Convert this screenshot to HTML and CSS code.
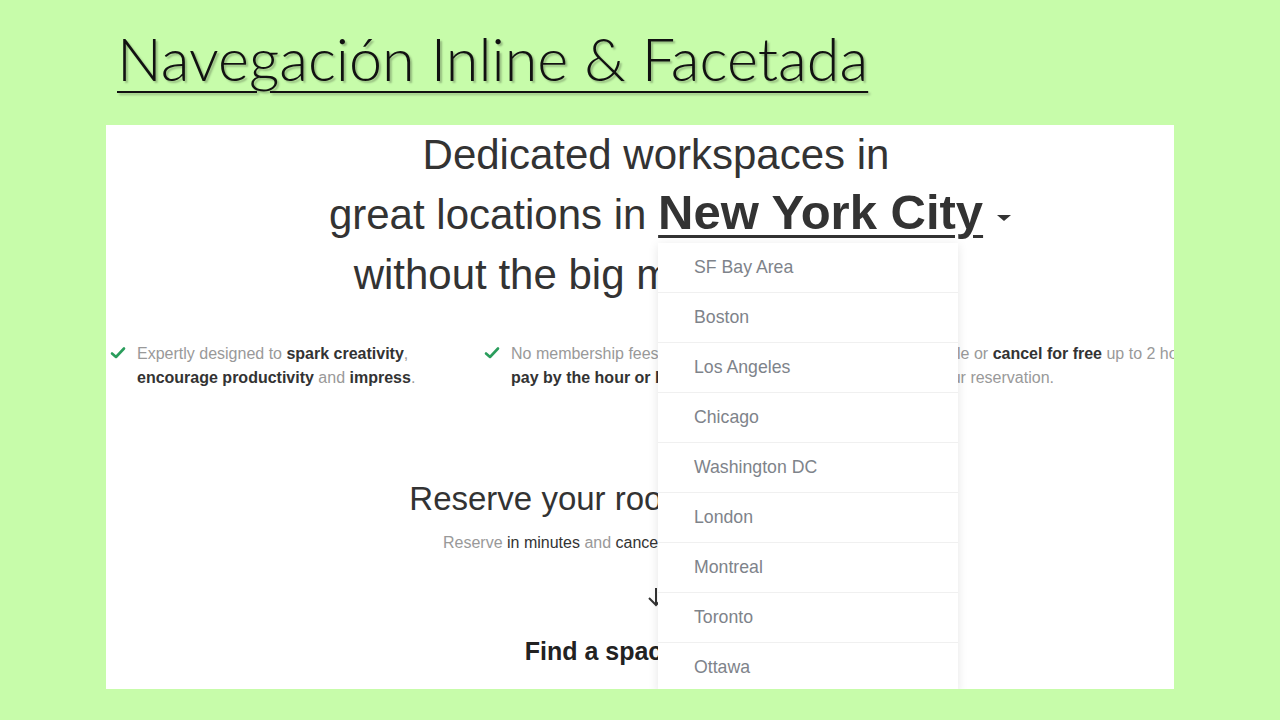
FILE: index.html
```html
<!DOCTYPE html>
<html lang="es">
<head>
<meta charset="utf-8">
<title>Navegación Inline &amp; Facetada</title>
<link rel="stylesheet" href="styles.css">
</head>
<body>
<header class="slide-head">
  <h1 class="slide-title">Navegación Inline &amp; Facetada</h1>
</header>
<main class="panel">
  <h2 class="hero">
    <span class="hero-line">Dedicated workspaces in</span>
    <span class="hero-line">great locations in <span class="city-wrap"><span class="city">New York City</span><svg class="caret" width="16" height="8" viewBox="0 0 16 8"><polygon points="1,1 15,1 8,7" fill="#333"/></svg></span></span>
    <span class="hero-line">without the big membership fees</span>
  </h2>

  <ul class="features">
    <li class="feature">
      <svg class="check" width="16" height="14" viewBox="0 0 16 14"><polyline points="2,7.5 6,11 14,2.5" fill="none" stroke="#2a9d5c" stroke-width="2.6" stroke-linecap="round" stroke-linejoin="round"/></svg>
      <p>Expertly designed to <b>spark creativity</b>,<br><b>encourage productivity</b> and <b>impress</b>.</p>
    </li>
    <li class="feature">
      <svg class="check" width="16" height="14" viewBox="0 0 16 14"><polyline points="2,7.5 6,11 14,2.5" fill="none" stroke="#2a9d5c" stroke-width="2.6" stroke-linecap="round" stroke-linejoin="round"/></svg>
      <p>No membership fees or long-term contracts,<br><b>pay by the hour or by the day</b>.</p>
    </li>
    <li class="feature">
      <svg class="check" width="16" height="14" viewBox="0 0 16 14"><polyline points="2,7.5 6,11 14,2.5" fill="none" stroke="#2a9d5c" stroke-width="2.6" stroke-linecap="round" stroke-linejoin="round"/></svg>
      <p>Reschedule or <b>cancel for free</b> up to 2 hours<br>before your reservation.</p>
    </li>
  </ul>

  <section class="reserve">
    <h3 class="reserve-title">Reserve your room in a few clicks</h3>
    <p class="reserve-sub">Reserve <span class="dark">in minutes</span> and <span class="dark">cancel</span> for free up to 2 hours before.</p>
    <svg class="arrow" width="24" height="20" viewBox="0 0 24 20"><path d="M12 1 V18 M5 11 L12 18 L19 11" fill="none" stroke="#333" stroke-width="2"/></svg>
    <h4 class="find">Find a space near you</h4>
  </section>

  <ul class="dropdown">
    <li class="dd-item">SF Bay Area</li>
    <li class="dd-item">Boston</li>
    <li class="dd-item">Los Angeles</li>
    <li class="dd-item">Chicago</li>
    <li class="dd-item">Washington DC</li>
    <li class="dd-item">London</li>
    <li class="dd-item">Montreal</li>
    <li class="dd-item">Toronto</li>
    <li class="dd-item">Ottawa</li>
  </ul>
</main>
</body>
</html>
```
FILE: styles.css
```css
html, body {
  margin: 0;
  padding: 0;
}
body {
  width: 1280px;
  height: 720px;
  background: #c7fcaa;
  overflow: hidden;
  font-family: "Liberation Sans", Arial, sans-serif;
}
.slide-head {
  height: 125px;
  padding-left: 117px;
  box-sizing: border-box;
}
.slide-title {
  margin: 0;
  padding-top: 22px;
  display: inline-block;
  font-family: Lato, "Open Sans", sans-serif;
  font-weight: 300;
  font-size: 59.3px;
  line-height: 72px;
  color: #111;
  text-decoration: underline;
  text-decoration-thickness: 2px;
  text-underline-offset: 10px;
  text-shadow: 2px 2px 2px rgba(0,0,0,0.25);
}
.panel {
  position: relative;
  margin-left: 106px;
  width: 1068px;
  height: 564px;
  background: #fff;
  overflow: hidden;
}
.hero {
  margin: 0;
  padding-left: 32px;
  font-weight: normal;
  font-size: 42px;
  line-height: 60px;
  color: #333;
  text-align: center;
}
.hero-line {
  display: block;
}
.city-wrap {
  position: relative;
}
.city {
  font-weight: bold;
  font-size: 49px;
  line-height: 1;
  text-decoration: underline;
  text-decoration-thickness: 3px;
  text-underline-offset: 6px;
}
.caret {
  position: absolute;
  left: calc(100% + 13px);
  top: 23px;
}
.features {
  list-style: none;
  margin: 37px 0 0 4px;
  padding: 0;
  display: grid;
  grid-template-columns: 374px 374px 374px;
  width: 1122px;
}
.feature {
  display: flex;
  gap: 11px;
  align-items: flex-start;
}
.check {
  flex: none;
  margin-top: 4px;
}
.feature p {
  margin: 0;
  font-size: 16px;
  line-height: 24px;
  color: #999;
  white-space: nowrap;
}
.feature b {
  color: #333;
}
.reserve {
  display: flex;
  flex-direction: column;
  align-items: center;
  padding-left: 32px;
}
.reserve-title {
  margin: 89px 0 0;
  font-weight: normal;
  font-size: 33px;
  line-height: 40px;
  color: #333;
  white-space: nowrap;
}
.reserve-sub {
  margin: 12px 0 0;
  font-size: 16px;
  line-height: 24px;
  color: #999;
  white-space: nowrap;
}
.dark {
  color: #333;
}
.arrow {
  margin-top: 32px;
  display: block;
}
.find {
  margin: 29px 0 0;
  font-size: 25px;
  line-height: 30px;
  font-weight: bold;
  color: #222;
  white-space: nowrap;
}
.dropdown {
  position: absolute;
  left: 552px;
  top: 118px;
  width: 300px;
  margin: 0;
  padding: 0;
  list-style: none;
  background: #fff;
  box-shadow: 0 2px 10px rgba(0,0,0,0.10);
}
.dd-item {
  height: 50px;
  box-sizing: border-box;
  padding-left: 36px;
  border-bottom: 1px solid #f0f0f0;
  font-size: 17.7px;
  line-height: 49px;
  color: #7e838a;
}
```
